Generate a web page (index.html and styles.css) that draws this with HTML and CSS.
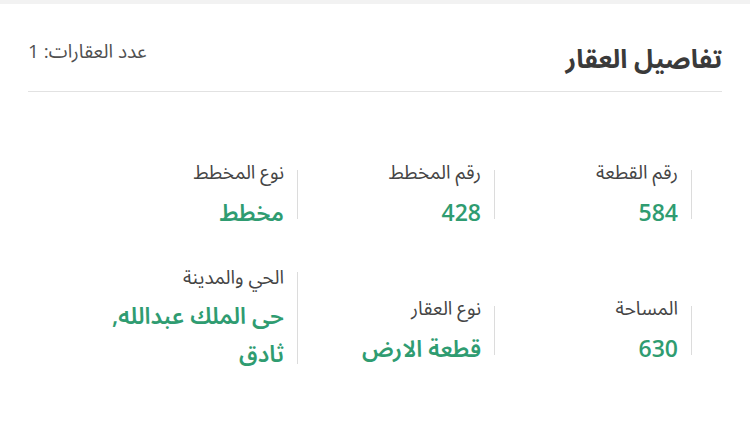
FILE: index.html
```html
<!DOCTYPE html>
<html lang="ar" dir="rtl">
<head>
<meta charset="utf-8">
<link rel="stylesheet" href="styles.css">
</head>
<body>
<div class="topstrip"></div>
<section class="card">
  <header class="head">
    <h1 class="title">تفاصيل العقار</h1>
    <span class="count">عدد العقارات: 1</span>
  </header>
  <div class="grid">
    <div class="item"><span class="label">رقم القطعة</span><span class="value">584</span></div>
    <div class="item"><span class="label">رقم المخطط</span><span class="value">428</span></div>
    <div class="item"><span class="label">نوع المخطط</span><span class="value">مخطط</span></div>
    <div class="item"><span class="label">المساحة</span><span class="value">630</span></div>
    <div class="item"><span class="label">نوع العقار</span><span class="value">قطعة الارض</span></div>
    <div class="item item-tall"><span class="label">الحي والمدينة</span><span class="value">حى الملك عبدالله, ثادق</span></div>
  </div>
</section>
</body>
</html>
```
FILE: styles.css
```css
html, body {
  margin: 0;
  padding: 0;
  background: #ffffff;
}
body {
  font-family: "Open Sans", "Noto Sans Arabic", "DejaVu Sans", sans-serif;
  color: #3c3c3c;
}
.topstrip {
  height: 4px;
  background: #f2f2f2;
}
.card {
  padding: 0 28px;
}
.head {
  display: flex;
  justify-content: space-between;
  align-items: flex-start;
  padding-top: 32px;
  height: 55px;
  border-bottom: 1px solid #e2e2e2;
}
.title {
  margin: 0;
  font-size: 26px;
  font-weight: 700;
  color: #3a3a3a;
  line-height: 44px;
}
.count {
  font-size: 19px;
  color: #505050;
  line-height: 30px;
}
.grid {
  display: grid;
  grid-template-columns: repeat(3, 197px);
  grid-auto-rows: 136px;
  align-items: center;
  margin-right: 30px;
  padding-top: 34px;
}
.item {
  display: flex;
  flex-direction: column;
  padding-right: 14px;
  gap: 9px;
  background: linear-gradient(#dcdcdc, #dcdcdc) no-repeat right center / 1px calc(100% - 22px);
}
.item-tall {
  gap: 6px;
  margin-bottom: 24px;
  background-size: 1px calc(100% - 16px);
}
.label {
  font-size: 19px;
  color: #454545;
  line-height: 26px;
}
.value {
  font-size: 23px;
  font-weight: 600;
  color: #2f9c71;
  line-height: 36px;
  max-width: 184px;
}
.item-tall .value {
  line-height: 38px;
}
```
